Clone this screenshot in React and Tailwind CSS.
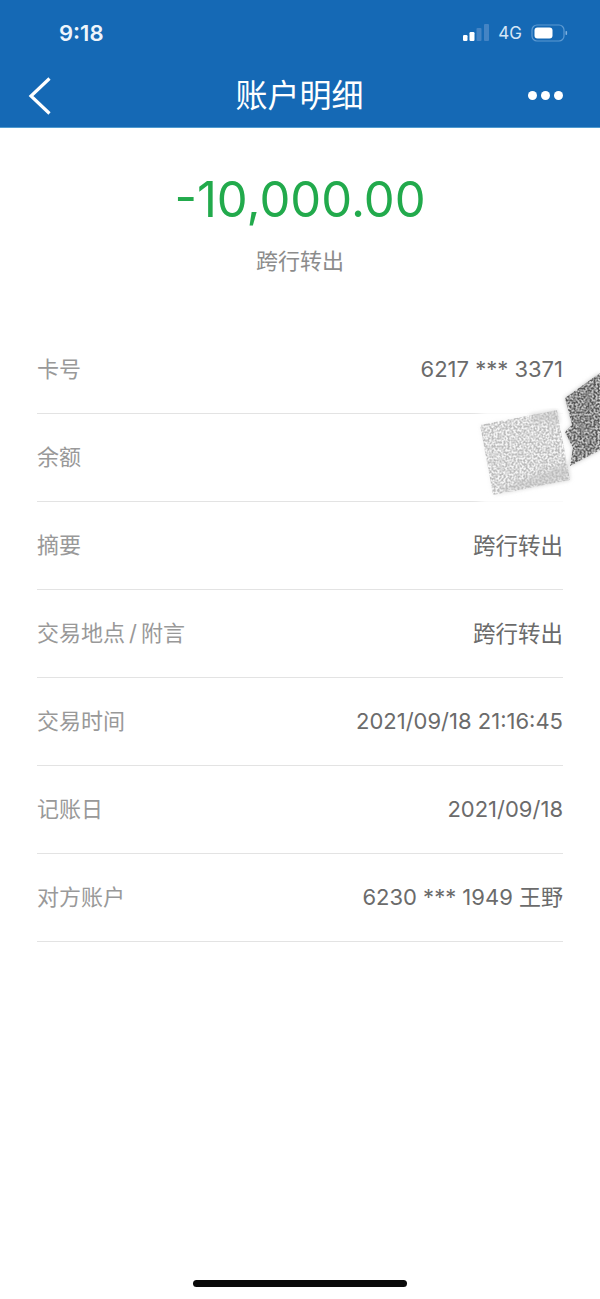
import React from "react";

const rows = [
  { label: "卡号", value: "6217 *** 3371" },
  { label: "余额", value: "" },
  { label: "摘要", value: "跨行转出", wide: true },
  { label: "交易地点", tail: "附言", value: "跨行转出", wide: true },
  { label: "交易时间", value: "2021/09/18 21:16:45" },
  { label: "记账日", value: "2021/09/18" },
  { label: "对方账户", value: "6230 *** 1949 王野" },
];

const font = "font-['Inter','Noto_Sans_CJK_SC',sans-serif]";

const SignalBattery = () => (
  <div className="flex items-center">
    <svg width="30" height="18" viewBox="0 0 30 18" className="block">
      <rect x="1" y="11" width="4.5" height="6" rx="1.2" fill="#ffffff" />
      <rect x="7.5" y="8" width="5" height="9" rx="1.2" fill="#ffffff" />
      <rect x="14.5" y="4" width="5" height="13" rx="1" fill="#4484c4" />
      <rect x="22" y="0" width="5" height="17" rx="1" fill="#4484c4" />
    </svg>
    <span className="ml-[6px] text-[17px] leading-none text-[#d6e6f5]">4G</span>
    <svg width="38" height="18" viewBox="0 0 38 18" className="ml-[9px] block">
      <rect x="1" y="1" width="32" height="16" rx="5" fill="none" stroke="#5d9ad2" strokeWidth="1.2" />
      <rect x="3.5" y="3.5" width="18" height="11" rx="3" fill="#ffffff" />
      <rect x="34.5" y="7" width="1.6" height="4" rx="0.8" fill="#7fb0de" />
    </svg>
  </div>
);

const Scribble = () => (
  <svg width="170" height="150" viewBox="0 0 170 150" className="absolute right-0 top-[370px]">
    <defs>
      <filter id="grain" x="-10%" y="-10%" width="120%" height="120%">
        <feTurbulence type="fractalNoise" baseFrequency="0.5" numOctaves="3" seed="7" result="noise" />
        <feColorMatrix
          in="noise"
          type="matrix"
          values="0 0 0 0 0  0 0 0 0 0  0 0 0 0 0  2.4 2.4 0 0 -1.9"
          result="speck"
        />
        <feComposite in="SourceGraphic" in2="speck" operator="in" result="grainy" />
        <feGaussianBlur in="grainy" stdDeviation="0.7" />
      </filter>
      <filter id="soft" x="-20%" y="-20%" width="140%" height="140%">
        <feGaussianBlur stdDeviation="5" />
      </filter>
      <filter id="haze" x="-10%" y="-10%" width="120%" height="120%">
        <feGaussianBlur stdDeviation="2" />
      </filter>
    </defs>
    {/* wipes the divider lines under the smudge */}
    <rect x="50" y="40" width="130" height="96" fill="#ffffff" filter="url(#soft)" />
    <polygon points="50,55 127,40 140,110 63,125" fill="#f5f5f5" filter="url(#haze)" />
    <polygon points="88,112 138,92 140,110 65,124" fill="#dcdcdc" filter="url(#haze)" />
    <polygon points="100,44 127,40 130,52 104,52" fill="#dedede" filter="url(#haze)" />
    <polygon points="170,3 135,28 142,55 135,62 143,78 140,96 170,80" fill="#c4c4c4" filter="url(#haze)" />
    <g filter="url(#grain)">
      <polygon points="50,55 127,40 140,110 63,125" fill="#bcbcbc" />
      <polygon points="170,3 135,28 142,55 135,62 143,78 140,96 170,80" fill="#555555" />
    </g>
  </svg>
);

export default function App() {
  return (
    <div className={`relative h-[1299px] w-[600px] overflow-hidden bg-white ${font}`}>
      <header className="h-[128px] border-b border-[#4f9bd0] bg-[#1569b5] text-white">
        <div className="flex h-[70px] items-start justify-between pl-[59px] pr-[31px] pt-[20px]">
          <span className="text-[22px] font-semibold leading-[26px] text-[#eef5fb]">9:18</span>
          <div className="pt-[4px]">
            <SignalBattery />
          </div>
        </div>
        <div className="grid h-[57px] grid-cols-[1fr_auto_1fr] items-center pl-[28px] pr-[37px] pb-[6px]">
          <svg width="24" height="38" viewBox="0 0 24 38" className="block">
            <path d="M21.5 1.5 L3 19 L21.5 36.5" fill="none" stroke="#ffffff" strokeWidth="3.2" />
          </svg>
          <h1 className="translate-x-[4px] text-[32px] leading-none text-white">账户明细</h1>
          <div className="flex justify-end gap-[4px]">
            <span className="h-[9px] w-[9px] rounded-full bg-white" />
            <span className="h-[9px] w-[9px] rounded-full bg-white" />
            <span className="h-[9px] w-[9px] rounded-full bg-white" />
          </div>
        </div>
      </header>

      <div className="flex flex-col items-center pt-[43px]">
        <div className="text-[49px] leading-[58px] text-[#22aa4c]">-10,000.00</div>
        <div className="mt-[19px] text-[22px] leading-[26px] text-[#8c8c8c]">跨行转出</div>
      </div>

      <div className="mt-[52px] px-[37px]">
        {rows.map((row) => (
          <div
            key={row.label}
            className="flex h-[88px] items-center justify-between border-b border-[#e3e3e3]"
          >
            <span className="text-[22px] text-[#999999]">
              {row.label}
              {row.tail && <span className="px-[4px]">/</span>}
              {row.tail}
            </span>
            <span className={row.wide ? "text-[22.5px] text-[#6b6b6b]" : "text-[22px] text-[#6b6b6b]"}>
              {row.value}
            </span>
          </div>
        ))}
      </div>

      <Scribble />

      <div className="absolute bottom-[12px] left-[193px] h-[7px] w-[214px] rounded-full bg-[#0a0a0a]" />
    </div>
  );
}
